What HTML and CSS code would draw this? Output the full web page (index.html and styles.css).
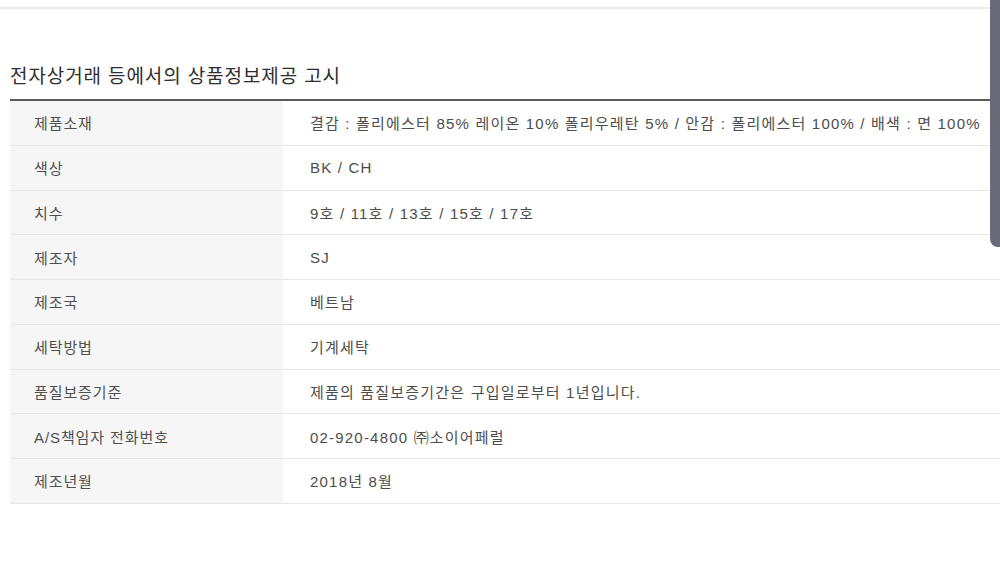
FILE: index.html
```html
<!DOCTYPE html>
<html lang="ko">
<head>
<meta charset="utf-8">
<title>상품정보제공 고시</title>
<link rel="stylesheet" href="styles.css">
</head>
<body>
<div class="topbar"></div>
<section class="notice">
  <h2 class="notice-title">전자상거래 등에서의 상품정보제공 고시</h2>
  <div class="info-table">
    <div class="row"><div class="label">제품소재</div><div class="value">결감 : 폴리에스터 85% 레이온 10% 폴리우레탄 5% / 안감 : 폴리에스터 100% / 배색 : 면 100%</div></div>
    <div class="row"><div class="label">색상</div><div class="value">BK / CH</div></div>
    <div class="row"><div class="label">치수</div><div class="value">9호 / 11호 / 13호 / 15호 / 17호</div></div>
    <div class="row"><div class="label">제조자</div><div class="value">SJ</div></div>
    <div class="row"><div class="label">제조국</div><div class="value">베트남</div></div>
    <div class="row"><div class="label">세탁방법</div><div class="value">기계세탁</div></div>
    <div class="row"><div class="label">품질보증기준</div><div class="value">제품의 품질보증기간은 구입일로부터 1년입니다.</div></div>
    <div class="row"><div class="label">A/S책임자 전화번호</div><div class="value">02-920-4800 ㈜소이어페럴</div></div>
    <div class="row"><div class="label">제조년월</div><div class="value">2018년 8월</div></div>
  </div>
</section>
<div class="scrollbar"></div>
</body>
</html>
```
FILE: styles.css
```css
html, body {
  margin: 0;
  padding: 0;
  background: #ffffff;
  overflow: hidden;
  width: 1000px;
  height: 573px;
}
body {
  position: relative;
  font-family: "Liberation Sans", "Noto Sans CJK KR", sans-serif;
  color: #505050;
}
.topbar {
  width: 990px;
  height: 7px;
  border-bottom: 2px solid #ebebeb;
}
.notice {
  padding: 0 0 0 10px;
}
.notice-title {
  margin: 55px 0 0 0;
  height: 35px;
  line-height: 26px;
  font-size: 19px;
  font-weight: normal;
  color: #2e2e2e;
  letter-spacing: 0.9px;
}
.info-table {
  width: 1000px;
  border-top: 2px solid #5a5a5a;
}
.row {
  display: grid;
  grid-template-columns: 273px 1fr;
  height: 43.75px;
  border-bottom: 1px solid #e6e6e6;
  font-size: 15px;
}
.label {
  background: #f6f6f6;
  padding-left: 24px;
  display: flex;
  align-items: center;
  color: #505050;
  letter-spacing: 0.9px;
}
.value {
  padding-left: 27px;
  display: flex;
  align-items: center;
  color: #4d4d4d;
  letter-spacing: 1.2px;
  white-space: nowrap;
}
.scrollbar {
  position: absolute;
  top: 0;
  left: 990px;
  width: 10px;
  height: 247px;
  background: #6b6a78;
  border-bottom-left-radius: 8px;
}
```
